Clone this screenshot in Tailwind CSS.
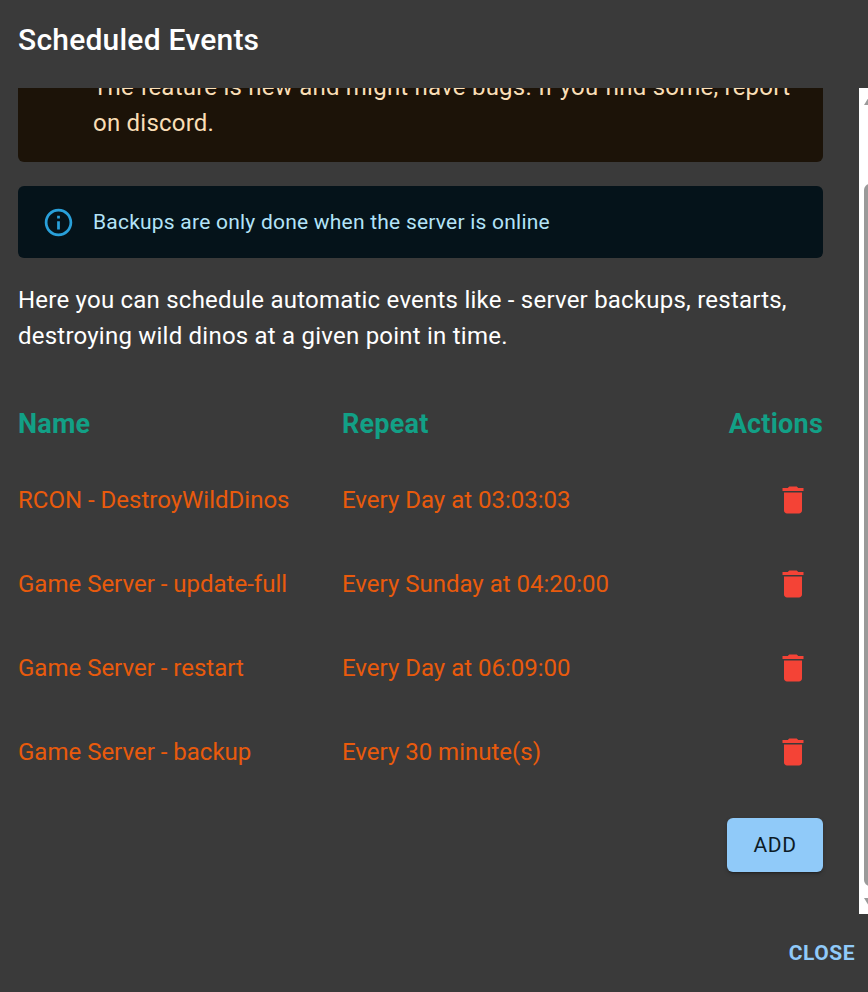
<!DOCTYPE html>
<html>
<head>
<meta charset="utf-8">
<script src="https://cdn.jsdelivr.net/npm/@tailwindcss/browser@4"></script>
</head>
<body class="m-0 bg-[#3a3a3a]">
<div class="w-[868px] h-[992px] flex flex-col overflow-hidden bg-[#3a3a3a] text-white font-['Roboto',sans-serif]">
  <h2 class="h-[88px] shrink-0 pl-[18px] pt-[20px] text-[30px] leading-[39px] font-medium tracking-[0.225px] text-white">Scheduled Events</h2>
  <div class="h-[826px] shrink-0 flex overflow-hidden">
    <div class="w-[859px] shrink-0 overflow-hidden">
      <div class="w-[805px] ml-[18px] -mt-[19px] flex flex-col">
        <div class="h-[93px] rounded-[6px] bg-[#1c1308] pl-[75px] pr-[24px] text-[24px] leading-[36px] tracking-[0.225px] text-[#f9deb6]">
          <p class="w-[706px]">The feature is new and might have bugs. If you find some, report on discord.</p>
        </div>
        <div class="mt-[24px] h-[72px] rounded-[6px] bg-[#05131a] pl-[24px] flex items-center text-[21px] tracking-[0.225px] text-[#b3e3f8]">
          <svg class="w-[33px] h-[33px] mr-[18px] shrink-0" viewBox="0 0 24 24" fill="#29a0da"><path d="M11 7h2v2h-2zm0 4h2v6h-2zm1-9C6.48 2 2 6.48 2 12s4.48 10 10 10 10-4.48 10-10S17.52 2 12 2zm0 18c-4.41 0-8-3.59-8-8s3.59-8 8-8 8 3.59 8 8-3.59 8-8 8z"/></svg>
          <span class="pt-[1px]">Backups are only done when the server is online</span>
        </div>
        <p class="mt-[24px] text-[24px] leading-[36px] tracking-[0.225px] text-white">Here you can schedule automatic events like - server backups, restarts, destroying wild dinos at a given point in time.</p>
        <div class="mt-[36px] grid grid-cols-[324px_1fr_auto] items-center text-[24px] text-[#e95a0c]">
          <div class="h-[68px] flex items-center text-[27px] font-bold tracking-[0.225px] text-[#12a086]">Name</div>
          <div class="h-[68px] flex items-center text-[27px] font-bold tracking-[0.225px] text-[#12a086]">Repeat</div>
          <div class="h-[68px] flex items-center justify-end text-[27px] font-bold tracking-[0.225px] text-[#12a086]">Actions</div>

          <div class="h-[84px] flex items-center">RCON - DestroyWildDinos</div>
          <div class="h-[84px] flex items-center">Every Day at 03:03:03</div>
          <div class="h-[84px] flex items-center justify-end pr-[12px]"><svg class="w-[36px] h-[36px]" viewBox="0 0 24 24" fill="#f44336"><path d="M6 19c0 1.1.9 2 2 2h8c1.1 0 2-.9 2-2V7H6v12zM19 4h-3.5l-1-1h-5l-1 1H5v2h14V4z"/></svg></div>

          <div class="h-[84px] flex items-center">Game Server - update-full</div>
          <div class="h-[84px] flex items-center">Every Sunday at 04:20:00</div>
          <div class="h-[84px] flex items-center justify-end pr-[12px]"><svg class="w-[36px] h-[36px]" viewBox="0 0 24 24" fill="#f44336"><path d="M6 19c0 1.1.9 2 2 2h8c1.1 0 2-.9 2-2V7H6v12zM19 4h-3.5l-1-1h-5l-1 1H5v2h14V4z"/></svg></div>

          <div class="h-[84px] flex items-center">Game Server - restart</div>
          <div class="h-[84px] flex items-center">Every Day at 06:09:00</div>
          <div class="h-[84px] flex items-center justify-end pr-[12px]"><svg class="w-[36px] h-[36px]" viewBox="0 0 24 24" fill="#f44336"><path d="M6 19c0 1.1.9 2 2 2h8c1.1 0 2-.9 2-2V7H6v12zM19 4h-3.5l-1-1h-5l-1 1H5v2h14V4z"/></svg></div>

          <div class="h-[84px] flex items-center">Game Server - backup</div>
          <div class="h-[84px] flex items-center">Every 30 minute(s)</div>
          <div class="h-[84px] flex items-center justify-end pr-[12px]"><svg class="w-[36px] h-[36px]" viewBox="0 0 24 24" fill="#f44336"><path d="M6 19c0 1.1.9 2 2 2h8c1.1 0 2-.9 2-2V7H6v12zM19 4h-3.5l-1-1h-5l-1 1H5v2h14V4z"/></svg></div>
        </div>
        <div class="mt-[24px] flex justify-end">
          <button class="w-[96px] h-[54px] pt-[1px] rounded-[6px] bg-[#90caf9] text-[21px] font-normal tracking-[0.6px] text-[#0d1b26] shadow-[0_3px_2px_-2px_rgba(0,0,0,0.3),0_2px_4px_0_rgba(0,0,0,0.2)]">ADD</button>
        </div>
      </div>
    </div>
    <div class="relative w-[9px] h-[826px] shrink-0 bg-white overflow-hidden">
      <div class="absolute left-[5px] top-[9px] w-0 h-0 border-l-[5px] border-r-[5px] border-b-[8px] border-l-transparent border-r-transparent border-b-[#9a9a9a]"></div>
      <div class="absolute left-[5px] top-[96px] w-[14px] h-[702px] rounded-[6px] bg-[#9a9a9a]"></div>
      <div class="absolute left-[5px] top-[810px] w-0 h-0 border-l-[5px] border-r-[5px] border-t-[8px] border-l-transparent border-r-transparent border-t-[#9a9a9a]"></div>
    </div>
  </div>
  <div class="flex-1 flex items-center justify-end pr-[13px]">
    <button class="text-[21px] font-bold tracking-[0.5px] text-[#90caf9] mt-[1px]">CLOSE</button>
  </div>
</div>
</body>
</html>
